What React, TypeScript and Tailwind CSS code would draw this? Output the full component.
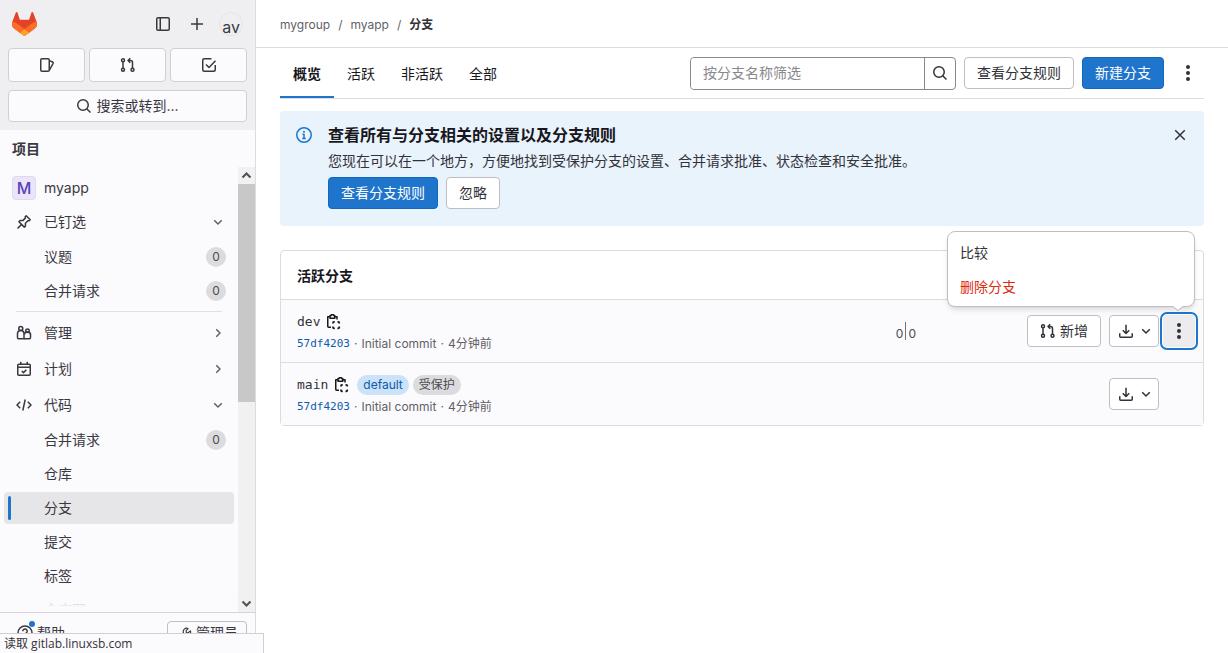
import type { ReactNode } from "react";

type IconName =
  | "sidebar"
  | "plus"
  | "issues"
  | "merge-request"
  | "todo"
  | "search"
  | "thumbtack"
  | "users"
  | "calendar"
  | "code"
  | "chevron-down"
  | "chevron-right"
  | "ellipsis"
  | "info"
  | "close"
  | "clipboard"
  | "download"
  | "question"
  | "wrench";

const ICONS: Record<IconName, ReactNode> = {
  sidebar: (
    <>
      <rect x="1.75" y="1.75" width="12.5" height="12.5" rx="1.25" />
      <path d="M5.25 1.75v12.5" />
    </>
  ),
  plus: <path d="M8 2v12M2 8h12" />,
  issues: (
    <>
      <rect x="1.75" y="1.75" width="8.5" height="12.5" rx="1.25" />
      <path d="M10.25 3.6 13.6 5a1 1 0 0 1 .5 1.3l-3.85 7.2" />
    </>
  ),
  "merge-request": (
    <>
      <circle cx="3" cy="3.25" r="1.5" />
      <circle cx="3" cy="12.75" r="1.5" />
      <circle cx="12.5" cy="12.75" r="1.5" />
      <path d="M3 4.75v6.5M12.5 11.25V5.5a2 2 0 0 0-2-2H8.25M10.25 1.25 8 3.5l2.25 2.25" />
    </>
  ),
  todo: (
    <>
      <path d="M14.25 8v4.75c0 .83-.67 1.5-1.5 1.5h-9.5c-.83 0-1.5-.67-1.5-1.5v-9.5c0-.83.67-1.5 1.5-1.5H10.5" />
      <path d="m5 7.500 3 3 6.500-6.750" />
    </>
  ),
  search: (
    <>
      <circle cx="7" cy="7" r="5.250" />
      <path d="m10.750 10.750 3.750 3.750" />
    </>
  ),
  thumbtack: (
    <>
      <path d="m10.200 1.800 4 4-1 1-1.300-.1-2.500 2.500.1 2.700-1.200 1.200-5.400-5.400 1.200-1.200 2.700.1 2.500-2.500-.1-1.300z" />
      <path d="M5.600 10.400 1.500 14.500" />
    </>
  ),
  users: (
    <>
      <circle cx="4.750" cy="3.500" r="2" />
      <path d="M8 13.750H2.500a1 1 0 0 1-1-1V8.750a3.250 3.250 0 0 1 6.500 0z" />
      <circle cx="11.500" cy="5.750" r="1.750" />
      <path d="M8 13.750h5.500a1 1 0 0 0 1-1v-2.250a3 3 0 0 0-6-1.200" />
    </>
  ),
  calendar: (
    <>
      <rect x="1.750" y="3.250" width="12.500" height="11" rx="1" />
      <path d="M1.750 6.250h12.500M4.750.750v2.500M11.250.750v2.500M5.750 10l1.750 1.600 2.900-2.900" />
    </>
  ),
  code: <path d="M4.200 4.800 1 8l3.200 3.200M11.800 4.800 15 8l-3.200 3.200M9.200 2.500 6.800 13.500" />,
  "chevron-down": <path d="m4.250 6.250 3.750 3.750 3.750-3.750" />,
  "chevron-right": <path d="m6.250 4.250 3.750 3.750-3.750 3.750" />,
  ellipsis: (
    <g fill="currentColor" stroke="none">
      <circle cx="8" cy="2" r="2" />
      <circle cx="8" cy="8" r="2" />
      <circle cx="8" cy="14" r="2" />
    </g>
  ),
  info: (
    <>
      <circle cx="8" cy="8" r="7.250" />
      <path d="M6.500 7.250H8v4M6.250 11.500h3.500" />
      <circle cx="8" cy="4.750" r="1" fill="currentColor" stroke="none" />
    </>
  ),
  close: <path d="m3.250 3.250 9.500 9.500M12.750 3.250l-9.500 9.500" />,
  clipboard: (
    <>
      <path d="M5 13.250H2.750a1 1 0 0 1-1-1V2.750H4M8.750 2.750H11V5.500" />
      <path d="M4 1.500h1.100a1.300 1.300 0 0 1 2.550 0h1.100v2.750H4z" />
      <path
        strokeWidth="1.750"
        d="M8.750 7.750H8a1 1 0 0 0-1 1v.75M11.500 7.750h.75a1 1 0 0 1 1 1v.75M13.250 12.500v.75a1 1 0 0 1-1 1h-.75M8.750 14.250H8a1 1 0 0 1-1-1v-.75"
      />
    </>
  ),
  download: <path d="M8 1.750v8.500M4.750 7.250 8 10.500l3.250-3.250M1.750 10.250v3c0 .55.45 1 1 1h10.500c.55 0 1-.45 1-1v-3" />,
  question: (
    <>
      <circle cx="8" cy="8" r="7" />
      <path d="M5.750 6.250a2.250 2.250 0 1 1 3.300 2c-.7.400-1.050.7-1.050 1.500" />
      <circle cx="8" cy="12" r=".9" fill="currentColor" stroke="none" />
    </>
  ),
  wrench: (
    <path d="M10.800 2.100A4.500 4.500 0 0 0 4.600 7.700L1.900 10.900a2 2 0 0 0 2.900 2.900l3.100-2.800a4.500 4.500 0 0 0 5.900-5.900L11 7.700 8.400 7.500 8.200 4.900z" />
  ),
};

function Icon({ name, className = "size-4" }: { readonly name: IconName; readonly className?: string }) {
  return (
    <svg
      viewBox="0 0 16 16"
      className={`shrink-0 ${className}`}
      fill="none"
      stroke="currentColor"
      strokeWidth="1.5"
      strokeLinejoin="round"
      aria-hidden="true"
    >
      {ICONS[name]}
    </svg>
  );
}

function Logo() {
  return (
    <svg viewBox="0 0 25 24" className="h-6 w-[25px]" aria-hidden="true">
      <path
        fill="#E24329"
        d="m24.507 9.5-.034-.09L21.082.562a.896.896 0 0 0-1.694.091l-2.29 7.01H7.825L5.535.653a.898.898 0 0 0-1.694-.09L.451 9.411.416 9.5a6.297 6.297 0 0 0 2.09 7.278l.012.01.03.022 5.16 3.867 2.56 1.935 1.554 1.176a1.051 1.051 0 0 0 1.268 0l1.555-1.176 2.56-1.935 5.197-3.89.014-.01A6.297 6.297 0 0 0 24.507 9.5Z"
      />
      <path
        fill="#FC6D26"
        d="m24.507 9.5-.034-.09a11.44 11.44 0 0 0-4.56 2.051l-7.447 5.632 4.742 3.584 5.197-3.89.014-.01A6.297 6.297 0 0 0 24.507 9.5Z"
      />
      <path
        fill="#FCA326"
        d="m7.707 20.677 2.56 1.935 1.555 1.176a1.051 1.051 0 0 0 1.268 0l1.555-1.176 2.56-1.935-4.743-3.584-4.755 3.584Z"
      />
      <path
        fill="#FC6D26"
        d="M5.01 11.461a11.43 11.43 0 0 0-4.56-2.05L.416 9.5a6.297 6.297 0 0 0 2.09 7.278l.012.01.03.022 5.16 3.867 4.745-3.584-7.444-5.632Z"
      />
    </svg>
  );
}

interface SubItem {
  readonly label: string;
  readonly count?: number;
  readonly active?: boolean;
}

const PINNED: readonly SubItem[] = [
  { label: "议题", count: 0 },
  { label: "合并请求", count: 0 },
];

const CODE_ITEMS: readonly SubItem[] = [
  { label: "合并请求", count: 0 },
  { label: "仓库" },
  { label: "分支", active: true },
  { label: "提交" },
  { label: "标签" },
  { label: "仓库图" },
];

function NavSection({ icon, label, open = false }: { readonly icon: IconName; readonly label: string; readonly open?: boolean }) {
  return (
    <button type="button" aria-expanded={open} className="flex h-9 w-full items-center gap-3 pr-3 pl-4 text-left">
      <Icon name={icon} />
      <span className="flex-1">{label}</span>
      <Icon name={open ? "chevron-down" : "chevron-right"} className="size-4 text-[#626168]" />
    </button>
  );
}

function NavLinks({ items }: { readonly items: readonly SubItem[] }) {
  return (
    <ul>
      {items.map((item) => (
        <li key={item.label} className="flex h-[34px] items-center px-1">
          <a
            href="#"
            aria-current={item.active ? "page" : undefined}
            className={`flex h-8 flex-1 items-center rounded pr-2 ${item.active ? "bg-[#e6e6e8]" : ""}`}
          >
            <span className={`ml-1 h-6 w-[3px] rounded-full ${item.active ? "bg-[#1f75cb]" : ""}`} />
            <span className="ml-[33px] flex-1">{item.label}</span>
            {item.count === undefined ? undefined : (
              <span className="flex size-5 items-center justify-center rounded-full bg-[#dcdcde] text-xs text-[#4c4b51]">
                {item.count}
              </span>
            )}
          </a>
        </li>
      ))}
    </ul>
  );
}

function Scrollbar() {
  return (
    <div aria-hidden="true" className="flex w-[17px] shrink-0 flex-col bg-[#f1f1f1] text-[#505050]">
      <svg viewBox="0 0 17 17" className="h-[17px]" fill="none" stroke="currentColor" strokeWidth="2">
        <path d="m4.500 10.500 4-4 4 4" />
      </svg>
      <div className="flex min-h-0 flex-1 flex-col">
        <div className="h-[53%] bg-[#c8c8c8]" />
      </div>
      <svg viewBox="0 0 17 17" className="h-[17px]" fill="none" stroke="currentColor" strokeWidth="2">
        <path d="m4.500 6.500 4 4 4-4" />
      </svg>
    </div>
  );
}

function Sidebar() {
  const shortcut = "flex h-[34px] flex-1 items-center justify-center rounded border border-[#d0d0d4] bg-[#fbfafd]";
  return (
    <aside className="flex w-64 shrink-0 flex-col border-r border-[#dcdcde] bg-[#fbfafd] text-[#3a383f]">
      <div className="bg-[#efeff1] px-2 pt-3 pb-2">
        <div className="flex h-6 items-center px-1">
          <a href="#" aria-label="主页" className="mr-auto"><Logo /></a>
          <div className="flex items-center gap-[18px]">
            <button type="button" aria-label="侧边栏"><Icon name="sidebar" /></button>
            <button type="button" aria-label="新建"><Icon name="plus" /></button>
          </div>
          <button
            type="button"
            aria-label="用户菜单"
            className="ml-3.5 flex size-6 justify-center overflow-hidden rounded-full border border-[#e4e4e8] pt-1 text-base leading-5"
          >
            av
          </button>
        </div>
        <div className="mt-3 flex gap-1">
          <button type="button" aria-label="议题" className={shortcut}><Icon name="issues" /></button>
          <button type="button" aria-label="合并请求" className={shortcut}><Icon name="merge-request" /></button>
          <button type="button" aria-label="待办事项" className={shortcut}><Icon name="todo" /></button>
        </div>
        <button
          type="button"
          className="mt-2 flex h-8 w-full items-center justify-center gap-1 rounded border border-[#d0d0d4] bg-[#fbfafd]"
        >
          <Icon name="search" />
          搜索或转到...
        </button>
      </div>

      <h2 className="flex h-[37px] items-center px-3 font-bold">项目</h2>

      <div className="flex min-h-0 flex-1">
        <nav aria-label="项目导航" className="relative min-w-0 flex-1 overflow-hidden pt-1">
          <a href="#" className="flex h-[33px] items-center gap-2 px-3">
            <span className="flex size-6 items-center justify-center rounded border border-[#e0d9f2] bg-[#ebe5f9] text-base font-medium text-[#5943b6]">
              M
            </span>
            myapp
          </a>
          <NavSection icon="thumbtack" label="已钉选" open />
          <NavLinks items={PINNED} />
          <hr className="mx-4 my-[3px] border-[#e0e0e4]" />
          <NavSection icon="users" label="管理" />
          <NavSection icon="calendar" label="计划" />
          <NavSection icon="code" label="代码" open />
          <NavLinks items={CODE_ITEMS} />
          <div className="pointer-events-none absolute inset-x-0 bottom-0 h-6 bg-linear-to-t from-[#fbfafd] from-20% to-transparent" />
        </nav>
        <Scrollbar />
      </div>

      <div className="flex items-center justify-between border-t border-[#d4d4d8] p-2">
        <button type="button" className="flex h-6 items-center gap-1 pl-[9px]">
          <span className="relative">
            <Icon name="question" />
            <span className="absolute -top-1 -right-0.5 size-1.5 rounded-full bg-[#1f75cb]" />
          </span>
          帮助
        </button>
        <a href="#" className="flex h-6 items-center gap-1 rounded border border-[#bfbfc3] pr-2 pl-3">
          <Icon name="wrench" className="size-3" />
          管理员
        </a>
      </div>
    </aside>
  );
}

const BUTTON = "flex h-8 items-center justify-center rounded border px-3";
const BUTTON_DEFAULT = "border-[#bfbfc3] bg-white text-[#333238]";
const BUTTON_PRIMARY = "border-[#1068bf] bg-[#1f75cb] text-white";

const TABS = ["概览", "活跃", "非活跃", "全部"];

function Toolbar() {
  return (
    <div className="flex h-[51px] border-b border-[#dcdcde]">
      <div role="tablist" className="flex">
        {TABS.map((tab, index) => (
          <button
            key={tab}
            type="button"
            role="tab"
            aria-selected={index === 0}
            className={`border-b-2 px-[13px] pt-1 text-[#18171d] ${index === 0 ? "border-[#1f75cb] font-bold" : "border-transparent"}`}
          >
            {tab}
          </button>
        ))}
      </div>
      <div className="ml-auto flex items-center gap-2">
        <div className="flex h-[33px] w-[266px] rounded border border-[#89888d]">
          <input
            type="search"
            aria-label="按分支名称筛选"
            placeholder="按分支名称筛选"
            className="min-w-0 flex-1 rounded-l bg-white px-3 outline-none placeholder:text-[#89888d]"
          />
          <button type="button" aria-label="搜索" className="flex w-[31px] items-center justify-center border-l border-[#89888d]">
            <Icon name="search" />
          </button>
        </div>
        <a href="#" className={`${BUTTON} ${BUTTON_DEFAULT}`}>查看分支规则</a>
        <a href="#" className={`${BUTTON} ${BUTTON_PRIMARY}`}>新建分支</a>
        <button type="button" aria-label="更多操作" className="flex size-8 items-center justify-center">
          <Icon name="ellipsis" />
        </button>
      </div>
    </div>
  );
}

function RulesAlert() {
  return (
    <section className="mt-3 flex rounded bg-[#e9f3fc] px-4 pt-4 pb-[17px]">
      <Icon name="info" className="size-4 text-[#1f75cb]" />
      <div className="ml-4 flex-1">
        <h2 className="text-base leading-4 font-bold text-[#18171d]">查看所有与分支相关的设置以及分支规则</h2>
        <p className="mt-2">您现在可以在一个地方，方便地找到受保护分支的设置、合并请求批准、状态检查和安全批准。</p>
        <div className="mt-1.5 flex gap-2">
          <a href="#" className={`${BUTTON} ${BUTTON_PRIMARY}`}>查看分支规则</a>
          <button type="button" className={`${BUTTON} ${BUTTON_DEFAULT}`}>忽略</button>
        </div>
      </div>
      <button type="button" aria-label="关闭" className="flex size-4 items-center justify-center">
        <Icon name="close" />
      </button>
    </section>
  );
}

function BranchMenu() {
  return (
    <div
      role="menu"
      className="absolute right-0 bottom-full z-10 mb-2 w-[248px] rounded-lg border border-[#bfbfc3] bg-white pt-1 pb-0.5 shadow-md"
    >
      <button type="button" role="menuitem" className="flex h-[34px] w-full items-center px-3">比较</button>
      <button type="button" role="menuitem" className="flex h-[34px] w-full items-center px-3 text-[#dd2b0e]">删除分支</button>
      <svg viewBox="0 0 12 6" className="absolute top-full right-2.5 h-1.5 w-3" aria-hidden="true">
        <path d="M0 0 5 4.500a1.500 1.500 0 0 0 2 0L12 0z" fill="#bfbfc3" />
        <path d="M0-1 6 4l6-5z" fill="#fff" />
      </svg>
    </div>
  );
}

interface Branch {
  readonly name: string;
  readonly isDefault: boolean;
}

const BRANCHES: readonly Branch[] = [
  { name: "dev", isDefault: false },
  { name: "main", isDefault: true },
];

function BranchRow({ name, isDefault }: Branch) {
  return (
    <li className="flex h-[63px] items-center border-b border-[#dcdcde] bg-[#fbfafd] pr-2 pl-4 last:h-[62px] last:border-b-0">
      <div className="flex-1 pt-0.5">
        <div className="flex h-6 items-center">
          <a href="#" className="font-['DejaVu_Sans_Mono','Liberation_Mono',monospace] text-[13px]">{name}</a>
          <button type="button" aria-label="复制分支名称" className="ml-1.5 text-[#18171d]"><Icon name="clipboard" /></button>
          {isDefault ? (
            <div className="ml-[7px] flex gap-1 text-xs">
              <span className="flex h-5 items-center rounded-full bg-[#cbe2f9] px-1.5 text-[#0b5cad]">default</span>
              <span className="flex h-5 items-center rounded-full bg-[#dcdcde] px-1.5 text-[#4c4b51]">受保护</span>
            </div>
          ) : undefined}
        </div>
        <div className="flex h-5 items-center gap-1 text-xs text-[#626168]">
          <a href="#" className="font-['DejaVu_Sans_Mono','Liberation_Mono',monospace] text-[11px] text-[#0b5cad]">57df4203</a>
          <span>·</span>
          <a href="#">Initial commit</a>
          <span>·</span>
          <time>4分钟前</time>
        </div>
      </div>
      {isDefault ? undefined : (
        <div className="mr-[111px] flex items-center text-xs text-[#4c4b51]">
          <span className="pt-1.5">0</span>
          <span className="mx-0.5 h-[18px] w-px bg-[#737278]" />
          <span className="pt-1.5">0</span>
        </div>
      )}
      <div className="flex items-center">
        {isDefault ? undefined : (
          <a href="#" className={`mr-2 gap-1 ${BUTTON} ${BUTTON_DEFAULT}`}>
            <Icon name="merge-request" />
            新增
          </a>
        )}
        <button
          type="button"
          aria-label="下载"
          className="flex h-8 w-[50px] items-center gap-1 rounded border border-[#bfbfc3] bg-white pl-2 text-[#333238]"
        >
          <Icon name="download" />
          <Icon name="chevron-down" />
        </button>
        <div className="relative ml-1 size-8">
          {isDefault ? undefined : (
            <>
              <button
                type="button"
                aria-label="更多操作"
                className="flex size-8 items-center justify-center rounded bg-[#ececef] ring-2 ring-[#1f75cb] ring-offset-1"
              >
                <Icon name="ellipsis" />
              </button>
              <BranchMenu />
            </>
          )}
        </div>
      </div>
    </li>
  );
}

export default function App() {
  return (
    <div className="flex h-screen overflow-hidden bg-white font-['Inter','Noto_Sans_CJK_SC',sans-serif] text-sm text-[#333238]">
      <Sidebar />
      <main className="min-w-0 flex-1">
        <nav aria-label="面包屑" className="flex h-12 items-center gap-2 border-b border-[#dcdcde] px-6 pt-0.5 text-xs text-[#626168]">
          <a href="#">mygroup</a>
          <span>/</span>
          <a href="#">myapp</a>
          <span>/</span>
          <a href="#" aria-current="page" className="font-bold text-[#333238]">分支</a>
        </nav>
        <div className="px-6">
          <Toolbar />
          <RulesAlert />
          <section className="mt-6 rounded border border-[#dcdcde]">
            <h2 className="flex h-[49px] items-center border-b border-[#dcdcde] px-4 pt-0.5 font-bold text-[#18171d]">活跃分支</h2>
            <ul>
              {BRANCHES.map((branch) => (
                <BranchRow key={branch.name} {...branch} />
              ))}
            </ul>
          </section>
        </div>
      </main>

      {/* Link preview in the window's lower left corner */}
      <div className="fixed bottom-0 left-0 z-20 h-5 w-[264px] border-t border-r border-[#d0d0d4] bg-[#fbfafd] px-1 font-['Open_Sans','Noto_Sans_CJK_SC',sans-serif] text-xs leading-5 text-[#333238]">
        读取 gitlab.linuxsb.com
      </div>
    </div>
  );
}
